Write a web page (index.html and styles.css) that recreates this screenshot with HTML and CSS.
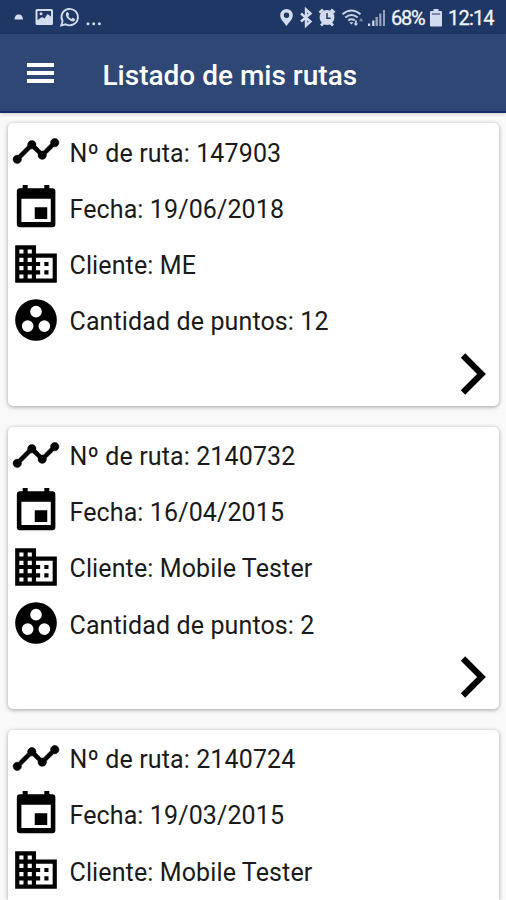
FILE: index.html
```html
<!DOCTYPE html>
<html lang="es">
<head>
<meta charset="utf-8">
<title>Listado de mis rutas</title>
<link rel="stylesheet" href="styles.css">
</head>
<body>
<svg class="defs" aria-hidden="true">
  <symbol id="timeline" viewBox="0 0 24 24"><path d="M23 8c0 1.100-.9 2-2 2-.18 0-.35-.02-.51-.07l-3.560 3.550c.05.16.07.34.07.52 0 1.100-.9 2-2 2s-2-.9-2-2c0-.18.02-.36.07-.52l-2.550-2.550c-.16.05-.34.07-.52.07s-.36-.02-.52-.07l-4.550 4.560c.05.16.07.33.07.51 0 1.100-.9 2-2 2s-2-.9-2-2 .9-2 2-2c.18 0 .35.02.51.07l4.560-4.550C8.020 9.360 8 9.180 8 9c0-1.100.9-2 2-2s2 .9 2 2c0 .18-.02.36-.07.52l2.550 2.550c.16-.05.34-.07.52-.07s.36.02.52.07l3.550-3.560C19.020 8.350 19 8.180 19 8c0-1.100.9-2 2-2s2 .9 2 2z" stroke="#000" stroke-width=".3"/></symbol>
  <symbol id="event" viewBox="0 0 24 24"><path d="M17.400 11.600h-6v5.700h6zM16 .9v1.600H8V.9H5.600v1.600H4.200c-.9 0-1.400.6-1.400 1.500V19.800c0 .9.5 1.400 1.400 1.400h15.700c.9 0 1.400-.5 1.400-1.400V4c0-.9-.5-1.500-1.400-1.500h-1.500V.9zM19.100 18.700H5V7.600h14.100z"/></symbol>
  <symbol id="business" viewBox="0 0 24 24"><path d="M12 7V3H2v18h20V7H12zM6 19H4v-2h2v2zm0-4H4v-2h2v2zm0-4H4V9h2v2zm0-4H4V5h2v2zm4 12H8v-2h2v2zm0-4H8v-2h2v2zm0-4H8V9h2v2zm0-4H8V5h2v2zm10 12h-8v-2h2v-2h-2v-2h2v-2h-2V9h8v10zm-2-8h-2v2h2v-2zm0 4h-2v2h2v-2z"/></symbol>
  <symbol id="points" viewBox="0 0 24 24"><path fill-rule="evenodd" d="M12 2a10 10 0 1 0 0 20 10 10 0 0 0 0-20zM8 17.700a2.800 2.800 0 1 1 0-5.600 2.800 2.800 0 0 1 0 5.600zM9.200 8a2.800 2.800 0 1 1 5.600 0 2.800 2.800 0 0 1-5.600 0zM16 17.700a2.800 2.800 0 1 1 0-5.600 2.800 2.800 0 0 1 0 5.600z"/></symbol>
  <symbol id="chevron" viewBox="0 0 26 42"><path d="M3 2.500 21.500 21 3 39.500" fill="none" stroke="#000" stroke-width="6.200"/></symbol>
</svg>

<div class="status">
  <svg class="status-left" viewBox="0 0 110 34" fill="#d3dcee">
    <path d="M14.500 19.500c.3-3.400 1.500-5 4.200-5s4 1.600 4.300 5z"/>
    <path fill-rule="evenodd" d="M37 9h14.500q1.500 0 1.500 1.500v13q0 1.500-1.500 1.500H37q-1.500 0-1.500-1.500v-13Q35.500 9 37 9zM37.500 11v9l4.500-3 2.500 1.500 3-4.500 3.500 2.500V11z"/>
    <circle cx="41" cy="13.800" r="1.500"/>
    <path d="M61.200 25.500l1.400-4.300A8.200 8.200 0 1 1 65.800 24.300z" fill="none" stroke="#d3dcee" stroke-width="1.900"/>
    <path d="M66.500 12.300q1.300-.8 2 .6l.7 1.700-1 1.500q1 2 3 2.900l1.400-1.200 2.300 1.200q.5 1.700-1.100 2.300-2.400.8-5.700-2.300-3.500-3.400-1.600-6.700z"/>
    <circle cx="88" cy="23.800" r="1.500"/><circle cx="93.700" cy="23.800" r="1.500"/><circle cx="99.400" cy="23.800" r="1.500"/>
  </svg>
  <div class="status-right">
    <svg class="signals" viewBox="278 0 110 34" fill="#d3dcee">
      <path fill-rule="evenodd" d="M286.500 9a6.300 6.300 0 0 0-6.300 6.300c0 3.700 3.200 6.700 6.300 10.700 3.100-4 6.300-7 6.300-10.700a6.300 6.300 0 0 0-6.300-6.300zm0 3.600a2.700 2.700 0 1 1 0 5.400 2.700 2.700 0 0 1 0-5.400z"/>
      <path d="M301 13.500l9.500 8-4.500 4V9.500l4.500 4-9.500 8" fill="none" stroke="#d3dcee" stroke-width="2.400"/>
      <circle cx="327" cy="17.500" r="7.400"/>
      <path d="M319.500 12.800l3.500-3.300M334.500 12.800l-3.500-3.300M321 25.500l2.500-2.500M333 25.500l-2.500-2.500" stroke="#d3dcee" stroke-width="2.800"/>
      <path d="M327 13v5.200h3.600" fill="none" stroke="#1f3764" stroke-width="1.500"/>
      <path d="M342.500 14.300q9-7.500 18 0M345.300 17.500q6.200-5 12.400 0M348.200 20.500q3.300-2.500 6.600 0" fill="none" stroke="#c6d1e6" stroke-width="2"/>
      <path d="M349.300 22.200h4.200l-2.100 2.400zM356.700 20.500v3h1.500l-2.300 2.500-2.300-2.500h1.500v-3z"/>
      <path d="M361 18l2.200 3.200h-4.400z" opacity=".5"/>
      <path d="M368 23.500h2.200V26H368zM372.200 20.500h2.200V26h-2.200z"/>
      <path d="M375.500 17h2.400v9h-2.400zM379.200 13.500h2.200V26h-2.200zM383 10h2v16h-2z" opacity=".65"/>
    </svg>
    <span class="percent">68%</span>
    <svg class="battery" viewBox="0 0 12 18" fill="#d3dcee"><path d="M3.500 0h5v2H11q1 0 1 1v13.500q0 1-1 1H1q-1 0-1-1V3q0-1 1-1h2.500z"/><path d="M1.800 4h8.400v2H1.800z" fill="#7888ab"/></svg>
    <span class="clock">12:14</span>
  </div>
</div>

<header class="appbar">
  <div class="menu"><i></i><i></i><i></i></div>
  <h1>Listado de mis rutas</h1>
</header>

<main class="list">
  <section class="card">
    <div class="row"><svg class="icon"><use href="#timeline"/></svg><span>Nº de ruta: 147903</span></div>
    <div class="row"><svg class="icon"><use href="#event"/></svg><span>Fecha: 19/06/2018</span></div>
    <div class="row"><svg class="icon"><use href="#business"/></svg><span>Cliente: ME</span></div>
    <div class="row"><svg class="icon"><use href="#points"/></svg><span>Cantidad de puntos: 12</span></div>
    <svg class="next"><use href="#chevron"/></svg>
  </section>
  <section class="card">
    <div class="row"><svg class="icon"><use href="#timeline"/></svg><span>Nº de ruta: 2140732</span></div>
    <div class="row"><svg class="icon"><use href="#event"/></svg><span>Fecha: 16/04/2015</span></div>
    <div class="row"><svg class="icon"><use href="#business"/></svg><span>Cliente: Mobile Tester</span></div>
    <div class="row"><svg class="icon"><use href="#points"/></svg><span>Cantidad de puntos: 2</span></div>
    <svg class="next"><use href="#chevron"/></svg>
  </section>
  <section class="card last">
    <div class="row"><svg class="icon"><use href="#timeline"/></svg><span>Nº de ruta: 2140724</span></div>
    <div class="row"><svg class="icon"><use href="#event"/></svg><span>Fecha: 19/03/2015</span></div>
    <div class="row"><svg class="icon"><use href="#business"/></svg><span>Cliente: Mobile Tester</span></div>
  </section>
</main>
</body>
</html>
```
FILE: styles.css
```css
* { box-sizing: border-box; }
body {
  margin: 0;
  height: 900px;
  overflow: hidden;
  display: flex;
  flex-direction: column;
  background: #f9f9f9;
  color: #1a1a1a;
  font-family: Roboto, sans-serif;
}
.defs { display: none; }
.status {
  flex: none;
  height: 34px;
  display: flex;
  justify-content: space-between;
  background: #1f3764;
  color: #f1f4fa;
}
.status-left { width: 110px; height: 34px; }
.status-right {
  display: flex;
  align-items: center;
  padding-right: 11px;
  font-size: 20px;
  line-height: 34px;
  white-space: nowrap;
}
.signals { width: 110px; height: 34px; }
.percent { width: 39px; padding-left: 3px; letter-spacing: -1.300px; padding-top: 2px; -webkit-text-stroke: .3px; }
.battery { width: 12px; height: 18px; margin: 1px 6px 0 3px; }
.clock { width: 47px; letter-spacing: -0.800px; padding-top: 2px; -webkit-text-stroke: .3px; }
.appbar {
  flex: none;
  height: 79px;
  display: flex;
  align-items: center;
  padding-left: 26.500px;
  background: #2e4775;
  border-bottom: 2px solid #142c63;
  box-shadow: 0 1px 4px rgba(0, 0, 0, .2);
}
.menu {
  width: 27px;
  display: flex;
  flex-direction: column;
  gap: 4px;
  margin-top: 1px;
}
.menu i { height: 4px; background: #fff; }
h1 {
  margin: 6px 0 0 49px;
  color: #fff;
  font-size: 28px;
  font-weight: 500;
  line-height: 34px;
  white-space: nowrap;
}
.list {
  flex: 1;
  min-height: 0;
  overflow: hidden;
  display: flex;
  flex-direction: column;
  gap: 20.300px;
  padding: 10.400px 7px 0 8px;
}
.card {
  flex: none;
  height: 282.900px;
  display: flex;
  flex-direction: column;
  background: #fff;
  border-radius: 5px;
  box-shadow: 0 1px 4px rgba(0, 0, 0, .36);
}
.card.last { flex: 1; min-height: 0; border-radius: 5px 5px 0 0; }
.row {
  flex: none;
  height: 56.200px;
  display: flex;
  align-items: center;
  padding-left: 3px;
  font-size: 25px;
  line-height: 32px;
  letter-spacing: .12px;
  white-space: nowrap;
}
.row span { margin: 4.600px 0 0 8.500px; }
.icon { width: 50px; height: 50px; fill: #000; }
.next { align-self: flex-end; width: 26px; height: 42px; margin: 4.800px 13px 0 0; }
```
